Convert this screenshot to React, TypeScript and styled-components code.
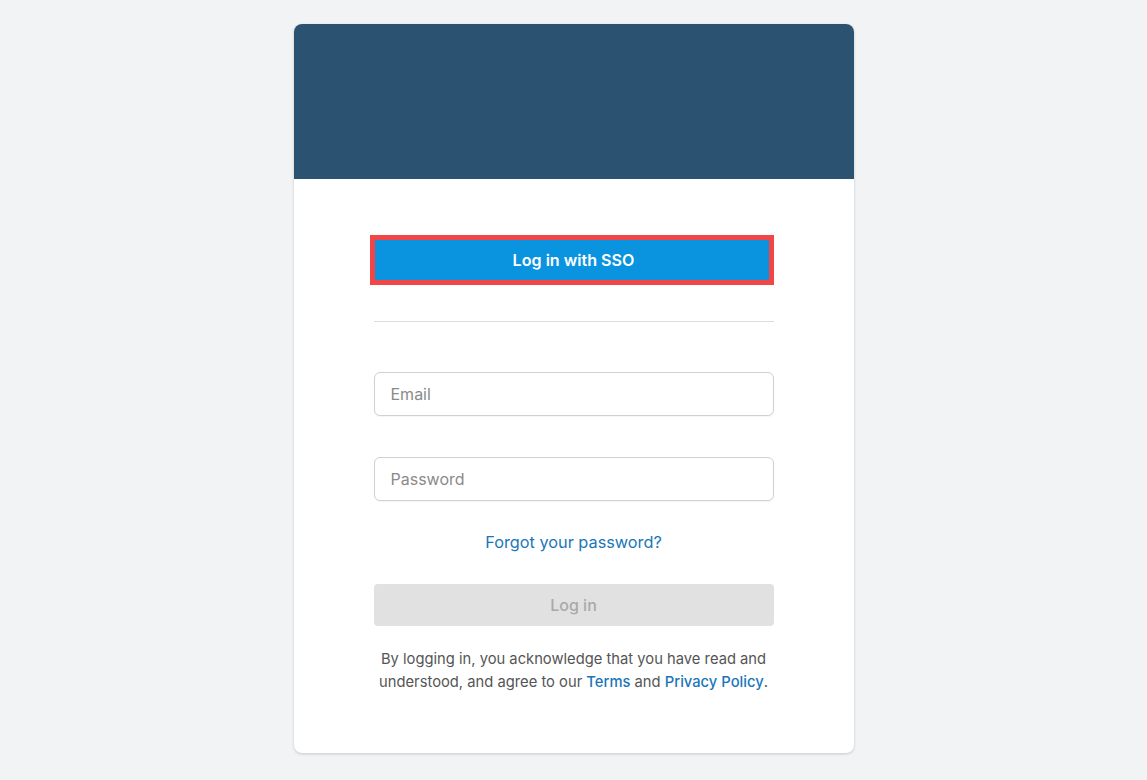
import styled, { createGlobalStyle } from "styled-components";

const GlobalStyle = createGlobalStyle`
  body {
    margin: 0;
    background: #f2f3f5;
    font-family: Inter, "Noto Sans", sans-serif;
  }
`;

export const Page = styled.div`
  display: flex;
  justify-content: center;
  padding-top: 24px;
  min-height: 780px;
  box-sizing: border-box;
`;

export const Card = styled.div`
  width: 560px;
  height: 729px;
  background: #ffffff;
  border-radius: 8px;
  box-shadow: 0 1px 3px rgba(0, 0, 0, 0.18);
  overflow: hidden;
  display: flex;
  flex-direction: column;
`;

export const Banner = styled.div`
  height: 155px;
  background: #2b5371;
`;

export const Content = styled.div`
  padding: 56px 80px 0;
  display: flex;
  flex-direction: column;
`;

export const SsoButton = styled.button`
  width: 404px;
  height: 50px;
  margin-left: -4px;
  padding: 0 0 0 4px;
  border: 5px solid #f24646;
  background: #0a93df;
  color: #ffffff;
  font-family: Inter, "Noto Sans", sans-serif;
  font-size: 16.1px;
  font-weight: 600;
  cursor: pointer;
`;

export const Divider = styled.hr`
  border: none;
  border-top: 1px solid #dcdcdc;
  margin: 36px 0 0;
`;

export const Field = styled.input<{ $top: number }>`
  height: 44px;
  margin-top: ${(p) => p.$top}px;
  border: 1px solid #cfd0d6;
  border-radius: 6px;
  padding: 0 16px;
  font-family: Inter, "Noto Sans", sans-serif;
  font-size: 16px;
  color: #333;
  box-sizing: border-box;
  outline: none;
  box-shadow: 0 1px 1px rgba(0, 0, 0, 0.04);
  &::placeholder {
    color: #8a8a8a;
  }
`;

export const ForgotLink = styled.a`
  margin-top: 29px;
  align-self: center;
  font-size: 16.3px;
  line-height: 24px;
  color: #1a76ba;
  text-decoration: none;
  cursor: pointer;
`;

export const LoginButton = styled.button`
  margin-top: 30px;
  height: 42px;
  border: none;
  border-radius: 4px;
  background: #e1e1e1;
  color: #a9a9a9;
  font-family: Inter, "Noto Sans", sans-serif;
  font-size: 16px;
  font-weight: 500;
`;

export const Legal = styled.p`
  margin: 22px -8px 0;
  text-align: center;
  font-size: 14.75px;
  line-height: 23px;
  color: #555555;
`;

export const LegalLink = styled.a`
  color: #1a76ba;
  font-weight: 500;
  text-decoration: none;
`;

const App = () => {
  return (
    <>
      <GlobalStyle />
      <Page>
        <Card>
          <Banner />
          <Content>
            <SsoButton>Log in with SSO</SsoButton>
            <Divider />
            <Field $top={50} type="email" placeholder="Email" />
            <Field $top={41} type="password" placeholder="Password" />
            <ForgotLink>Forgot your password?</ForgotLink>
            <LoginButton disabled>Log in</LoginButton>
            <Legal>
              By logging in, you acknowledge that you have read and understood,
              and agree to our <LegalLink>Terms</LegalLink> and{" "}
              <LegalLink>Privacy Policy</LegalLink>.
            </Legal>
          </Content>
        </Card>
      </Page>
    </>
  );
};

export default App;
